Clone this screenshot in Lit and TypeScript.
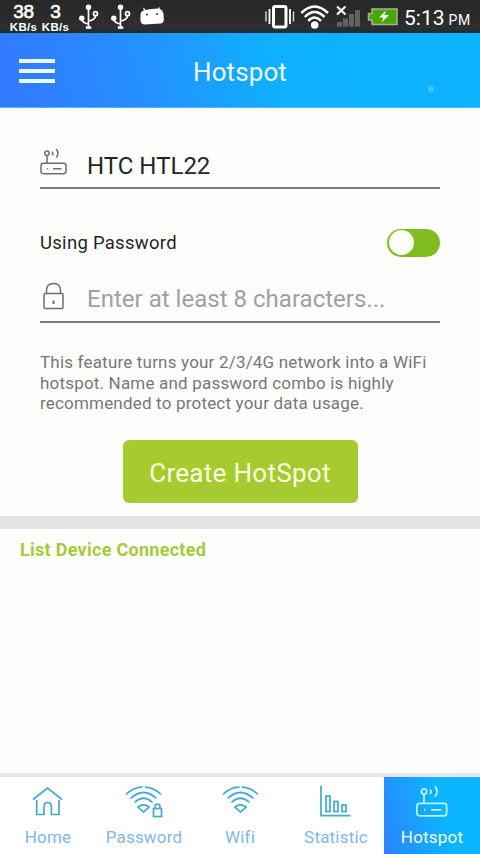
import { LitElement, html, css, svg } from "lit";
import { customElement } from "lit/decorators.js";
import { classMap } from "lit/directives/class-map.js";

const router = svg`
  <path d="M7 15V7.5"/><circle cx="7" cy="5.3" r="2.2"/>
  <path d="M12.2 3.6q1.3 1.9 0 3.8M16.2 1q3.6 4.3 0 8.6"/>
  <rect x="1" y="15.2" width="25" height="10.5" rx="2.4"/>
  <path d="M7 20.700h1.2M13 20.700h8.5"/>`;

const wifiArcs = svg`
  <path d="M1 9.5Q9 1.8 17.5 2.2M20 2.2Q29 2.6 36 9.5"/>
  <path d="M5.500 13.500Q18.500 1.500 31.500 13.500M9.500 17.500Q18.500 9 27.500 17.500"/>
  <path d="M13 22q5.500-4.200 11 0l-5.500 5.200z"/>`;

const tabs = [
  { label: "Home", cls: "home", w: 32, h: 30, icon: svg`<path d="M1 12.500L15.500 1.200 30 12.500M4.700 13V27.500H12V20q0-4.500 3.700-4.500t3.700 4.500v7.500h7.600v-14.500"/>` },
  {
    label: "Password", cls: "password", w: 40, h: 34, icon: svg`${wifiArcs}
    <rect x="28.500" y="23.500" width="8" height="8"/><path d="M30 23.500v-2q0-2.500 2.500-2.500T35 21.500v2"/>` },
  { label: "Wifi", cls: "wifi", w: 37, h: 30, icon: wifiArcs },
  {
    label: "Statistic", cls: "statistic", w: 33, h: 32, icon: svg`<path d="M2 .5V30.600H31.500"/>
    <rect x="7" y="11" width="4" height="15.500"/><rect x="15" y="16.500" width="4" height="10"/><rect x="23" y="20" width="4" height="6.500"/>` },
  { label: "Hotspot", cls: "hotspot", w: 32, h: 33, icon: svg`<g transform="translate(-.3 .2) scale(1.19)">${router}</g>`, active: true },
];

@customElement("status-bar")
class StatusBar extends LitElement {
  static styles = css`
    :host { display: flex; height: 33px; background: linear-gradient(#272727, #2e2e2e 85%, #202a30); color: #fff; box-sizing: border-box; padding-left: 8px; font-family: Roboto, sans-serif; }
    .rate { width: 31px; margin-right: 1px; display: flex; flex-direction: column; align-items: center; font-family: "Liberation Sans", sans-serif; white-space: nowrap; }
    .num { font-size: 19px; line-height: 19px; height: 19px; padding-top: 2px; -webkit-text-stroke: .6px #fff; letter-spacing: -.3px; }
    .unit { font-size: 11.500px; line-height: 12px; font-weight: 700; letter-spacing: .3px; }
    .icons { flex: 1; display: block; height: 33px; }
    .time { width: 76px; font-size: 21px; line-height: 36px; white-space: nowrap; }
    .time small { font-size: 14px; margin-left: 4px; letter-spacing: .6px; }
  `;
  render() {
    const usb = svg`<g fill="none" stroke="#fff" stroke-width="1.7">
      <path d="M9.500 7v20M9.500 24Q3 23 2.800 18.500M9.500 21Q16.500 20 16.500 15"/>
      <circle cx="16.500" cy="13.700" r="2"/><circle cx="9.500" cy="7.200" r="1.900" fill="#fff"/><circle cx="2.800" cy="18.300" r="1.900" fill="#fff"/><path stroke-width="2.500" d="M6.800 27.600h5.400"/></g>`;
    return html`
      <div class="rate"><span class="num">38</span><span class="unit">KB/s</span></div>
      <div class="rate"><span class="num">3</span><span class="unit">KB/s</span></div>
      <svg class="icons" viewBox="72 0 332 33" preserveAspectRatio="xMinYMin">
        <g transform="translate(79 0)">${usb}</g>
        <g transform="translate(111 0)">${usb}</g>
        <path fill="#fff" d="M140.500 14q.3-2.500 3.500-3.700l-1-2.300.9-.3 1.500 2.200q6-1 12.500-1.300l.7-1.400.9.100v1.500q3.500 1.600 4 5.200l.3 5.500q0 3.500-3 4l-16 1q-4 0-4.300-4z"/>
        <circle cx="147" cy="14.500" r="1" fill="#292929"/><circle cx="157" cy="14" r="1" fill="#292929"/>
        <rect x="273.500" y="6.500" width="12.500" height="20.500" rx="1.500" fill="none" stroke="#fff" stroke-width="3"/>
        <path d="M269.500 9v15M290 9v15" stroke="#fff" stroke-width="1.800"/><path d="M266 11.500v10M293.500 11.500v10" stroke="#ddd" stroke-width="1.400"/>
        <g fill="none" stroke="#fff" stroke-width="2.500"><path d="M301.300 13Q314.500 0 328 13M304.800 17Q314.500 7 324.500 17M308.300 20.800Q314.500 14.200 321 20.800"/></g>
        <circle cx="314.700" cy="25" r="3.800" fill="#fff"/>
        <path d="M337 6.500l8.500 8M345.500 6.500l-8.500 8" stroke="#fff" stroke-width="2.200"/>
        <path d="M337 22h5v4.500h-5zM343 18.500h5v8h-5zM349 14h5v12.500h-5zM355 10h5v16.500h-5z" fill="#626262"/>
        <path d="M372 9H397V24.500H372V20H368.500V13.500H372z" fill="#48a800" stroke="#a9b0a3" stroke-width="1.500"/>
        <path d="M386 10.500l-7 7h4.500l-2 5 7.500-7.500h-4.500z" fill="#fff"/>
      </svg>
      <div class="time">5:13<small>PM</small></div>`;
  }
}

@customElement("tab-bar")
class TabBar extends LitElement {
  static styles = css`
    :host { display: grid; grid-template-columns: repeat(5, 1fr); height: 77px; background: #fff; font-family: Roboto, sans-serif; }
    .tab { display: flex; flex-direction: column; align-items: center; color: #80b9dc; font-size: 17px; line-height: 20px; letter-spacing: .2px; }
    .pic { height: 50px; display: flex; align-items: flex-start; padding-top: 8px; box-sizing: border-box; }
    svg { display: block; fill: none; stroke: #43a9d1; stroke-width: 1.7; }
    .home svg { margin-top: 2px; }
    .password svg { margin-left: 2px; }
    .statistic svg { margin-left: -1px; }
    .active { color: #effcff; background: linear-gradient(75deg, #2c83ff, #0cb5ff 60%); }
    .active svg { stroke: #b5f3ff; stroke-width: 1.500; }
  `;
  render() {
    return tabs.map(t => html`
      <div class=${classMap({ tab: true, [t.cls]: true, active: !!t.active })}>
        <div class="pic"><svg width=${t.w} height=${t.h} viewBox="0 0 ${t.w} ${t.h}">${t.icon}</svg></div>
        <span>${t.label}</span>
      </div>`);
  }
}

@customElement("app-root")
class AppRoot extends LitElement {
  static styles = css`
    :host { display: flex; flex-direction: column; width: 480px; height: 854px; overflow: hidden; background: #fdfefc; font-family: Roboto, sans-serif; color: #252525; }
    header { height: 75px; box-sizing: border-box; display: grid; grid-template-columns: 80px 1fr 80px; align-items: center; background: linear-gradient(75deg, #317bff 5%, #2492ff 32%, #0fb0ff 57%, #0cb4ff); border-bottom: 1px solid #45b9f5; }
    .menu { width: 36px; height: 24px; margin: 2px 0 0 19px; box-sizing: border-box; display: flex; flex-direction: column; justify-content: space-between; }
    .menu i { height: 4px; background: #edfaff; }
    h1 { margin: 0; padding-top: 4px; text-align: center; font-weight: 400; font-size: 26px; color: #eaf9ff; letter-spacing: .1px; }
    .dot { width: 6px; height: 6px; border-radius: 50%; background: #43c5ff; margin: 37px 0 0 28px; }
    main { height: 408px; box-sizing: border-box; padding: 0 40px; display: flex; flex-direction: column; }
    .field { display: flex; box-sizing: border-box; border-bottom: 2px solid #7d7d7d; }
    .field svg { width: 28px; fill: none; stroke: #67707c; stroke-width: 1.500; flex: none; }
    .name { height: 81px; padding-top: 40px; font-size: 24px; line-height: 36px; }
    .value { margin-left: 19px; white-space: nowrap; }
    .toggle { display: flex; align-items: center; justify-content: space-between; height: 29px; margin-top: 39px; font-size: 18.500px; letter-spacing: .28px; }
    .switch { width: 53px; height: 28px; border-radius: 14px; background: #7fbd20; box-sizing: border-box; padding: 1.500px; }
    .switch i { display: block; width: 25px; height: 25px; border-radius: 50%; background: #fdfefc; }
    .pass { height: 66px; padding-top: 25px; font-size: 24px; line-height: 35px; color: #a0a0a0; letter-spacing: .02px; }
    p { margin: 29px 0 0; font-size: 17px; line-height: 20.500px; color: #777; letter-spacing: .19px; white-space: nowrap; }
    .create { align-self: center; width: 235px; height: 63px; margin-top: 26px; border: 0; border-radius: 6px; background: #a6cb30; color: #fbffdf; font: 400 26px Roboto, sans-serif; letter-spacing: .3px; padding: 3px 0 0; }
    .list { flex: 1; border-top: 13px solid #e5e5e5; border-bottom: 4px solid #e6e6ea; padding: 10px 20px; box-sizing: border-box; }
    h2 { margin: 0; font-size: 18px; line-height: 21px; font-weight: 700; color: #a7c93c; letter-spacing: .28px; }
  `;
  render() {
    return html`
      <status-bar></status-bar>
      <header><div class="menu"><i></i><i></i><i></i></div><h1>Hotspot</h1><div class="dot"></div></header>
      <main>
        <div class="field name"><svg height="28" viewBox="0 0 28 28">${router}</svg><span class="value">HTC HTL22</span></div>
        <div class="toggle"><span>Using Password</span><div class="switch"><i></i></div></div>
        <div class="field pass"><svg height="29" viewBox="0 0 28 29"><rect x="4" y="11.500" width="19" height="15" rx="1"/><path d="M6.500 11.500V8.500Q6.500 1.500 13.500 1.500T20.500 8.500V11.500"/><path d="M13.500 18.500v3.500" stroke-width="2"/></svg><span class="value">Enter at least 8 characters...</span></div>
        <p>This feature turns your 2/3/4G network into a WiFi<br>hotspot. Name and password combo is highly<br>recommended to protect your data usage.</p>
        <button class="create">Create HotSpot</button>
      </main>
      <section class="list"><h2>List Device Connected</h2></section>
      <tab-bar></tab-bar>`;
  }
}
